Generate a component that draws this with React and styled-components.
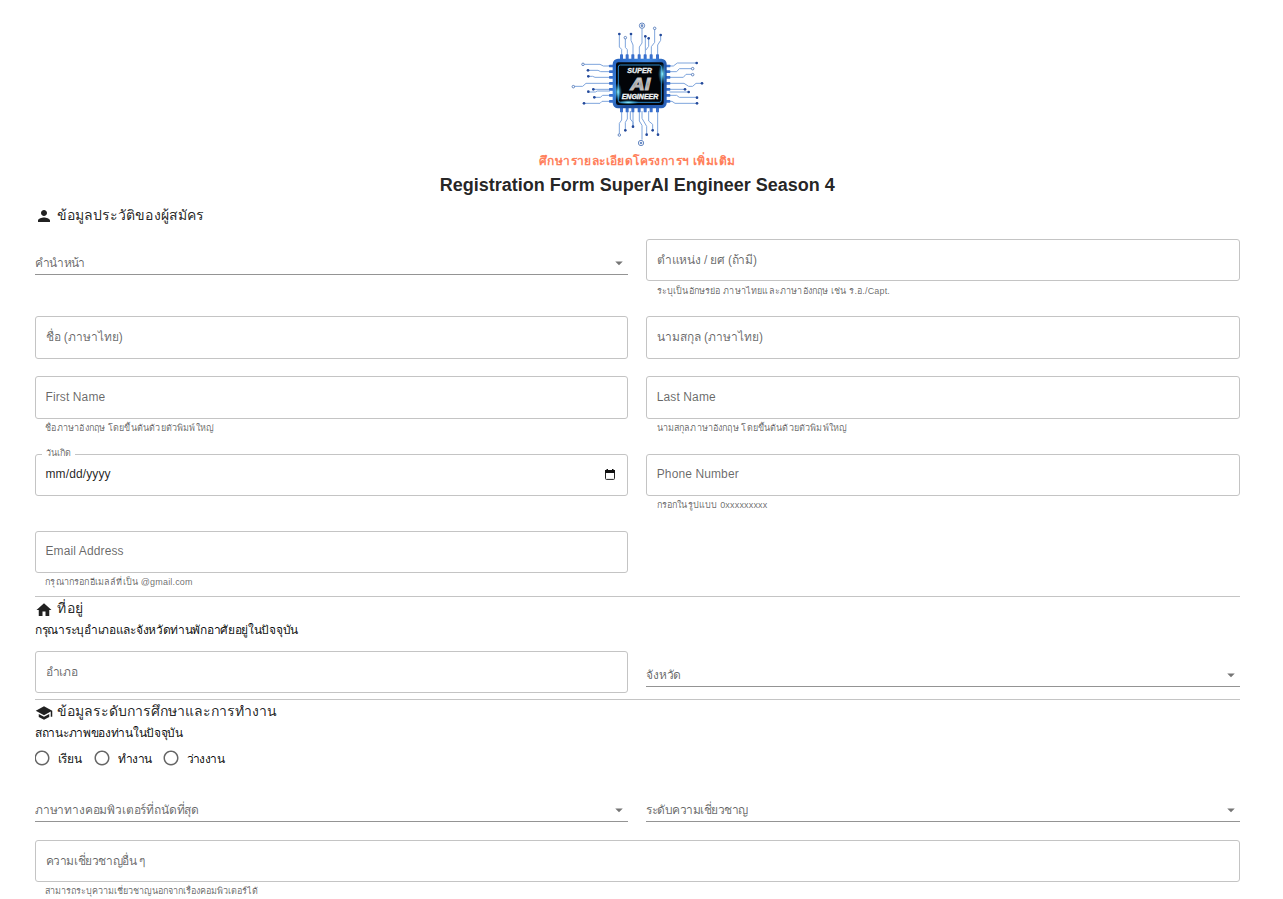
import React from "react";
import styled, { createGlobalStyle } from "styled-components";

const GlobalStyle = createGlobalStyle`
  *, *::before, *::after { box-sizing: border-box; }
  html, body { margin: 0; padding: 0; background: #fff; overflow: hidden; }
  body {
    color: rgba(0, 0, 0, 0.87);
    font-family: "Liberation Sans", sans-serif;
    font-size: 12px;
  }
`;

const Page = styled.main`
  width: 1204.5px;
  height: 899px;
  margin-left: 35px;
  overflow: hidden;
`;

const Header = styled.header`
  display: flex;
  flex-direction: column;
  align-items: center;
  height: 203.5px;
  padding-top: 15px;
`;

const Logo = styled.svg`
  display: block;
  width: 155px;
  height: 135px;
`;

const Text = styled.span`
  display: inline-block;
  white-space: nowrap;
  letter-spacing: ${(p) => p.$ls || 0}px;
`;

const MoreLink = styled.a`
  height: 22px;
  line-height: 22px;
  font-size: 12px;
  font-weight: 700;
  color: #ff7f5c;
`;

const Title = styled.h1`
  margin: 0;
  height: 26px;
  line-height: 26px;
  font-size: 18px;
  font-weight: 700;
`;

const SectionTitle = styled.h2`
  display: flex;
  align-items: center;
  gap: 4px;
  height: 23px;
  margin: 0;
  font-size: 14px;
  font-weight: 400;
  line-height: 23px;
  svg { display: block; width: 18px; height: 18px; margin-top: 2px; fill: currentColor; }
`;

const SubTitle = styled.p`
  height: 20px;
  margin: 0;
  line-height: 20px;
  color: rgba(0, 0, 0, 0.95);
`;

const Grid = styled.div`
  display: grid;
  grid-template-columns: 1fr 1fr;
  column-gap: 18px;
  row-gap: 17.85px;
  align-items: start;
  padding-top: ${(p) => p.$top || 0}px;
`;

const FieldWrap = styled.div`
  grid-column: ${(p) => (p.$full ? "1 / -1" : "auto")};
`;

const Box = styled.div`
  position: relative;
  display: flex;
  align-items: center;
  justify-content: space-between;
  height: 42.3px;
  padding: 0 12px 2px 9.5px;
  border: 1px solid #c4c4c4;
  border-radius: 3px;
  color: ${(p) => (p.$filled ? "rgba(0,0,0,0.87)" : "rgba(0,0,0,0.6)")};
`;

const FloatLabel = styled.span`
  position: absolute;
  left: 6px;
  top: -9px;
  height: 15px;
  padding: 0 4px 0 3.5px;
  line-height: 15px;
  background: #fff;
  color: rgba(0, 0, 0, 0.6);
  font-size: 9px;
`;

const CalendarIcon = styled.svg`
  width: 10px;
  height: 11px;
  margin-top: 2px;
`;

const Helper = styled.div`
  height: 14.75px;
  margin: 2.25px 10.25px 0;
  font-size: 9px;
  line-height: 15px;
  color: rgba(0, 0, 0, 0.6);
`;

const SelectLine = styled.div`
  display: flex;
  align-items: center;
  justify-content: space-between;
  height: 24px;
  margin-top: 12px;
  padding-bottom: 1px;
  border-bottom: 1px solid #949494;
  color: rgba(0, 0, 0, 0.6);
  svg { width: 18px; height: 18px; margin-top: 1px; fill: #757575; }
`;

const Divider = styled.hr`
  height: 1px;
  margin: 6px 0 0;
  border: 0;
  background: #c4c4c4;
`;

const RadioRow = styled.div`
  display: flex;
  align-items: center;
  height: 30px;
  margin-left: -2px;
  color: rgba(0, 0, 0, 0.95);
`;

const Radio = styled.label`
  display: flex;
  align-items: center;
  width: ${(p) => p.$w}px;
  gap: 6.5px;
  svg { display: block; width: 18px; height: 18px; fill: #666; }
`;

function Field({ label, ls, helper, hls, full }) {
  return (
    <FieldWrap $full={full}>
      <Box><Text $ls={ls}>{label}</Text></Box>
      {helper && <Helper><Text $ls={hls}>{helper}</Text></Helper>}
    </FieldWrap>
  );
}

function SelectField({ label, ls }) {
  return (
    <SelectLine>
      <Text $ls={ls}>{label}</Text>
      <svg viewBox="0 0 24 24"><path d="M7 10l5 5 5-5z" /></svg>
    </SelectLine>
  );
}

function RadioOption({ label, width, ls }) {
  return (
    <Radio $w={width}>
      <svg viewBox="0 0 24 24">
        <path d="M12 2C6.48 2 2 6.48 2 12s4.48 10 10 10 10-4.48 10-10S17.52 2 12 2m0 18c-4.42 0-8-3.58-8-8s3.58-8 8-8 8 3.58 8 8-3.58 8-8 8" />
      </svg>
      <Text $ls={ls}>{label}</Text>
    </Radio>
  );
}

const traces = [
  "M185 125V103L178 96V58", "M202 125V104L196 97V70", "M219 125V90L213 76V58", "M238 125V96L246 84V40",
  "M256 125V64", "M266 70V94L257 106", "M274 125V95L284 82V42", "M293 125V90L302 76V60",
  "M185 288V315L178 325V356", "M202 288V312L196 322V345", "M219 288V334", "M238 288V318L246 331V374",
  "M211 288V312L219 322V334", "M246 288V310L260 334V358", "M266 288V318L278 328V345", "M293 288V358",
  "M150 153H130L120 148H72", "M150 170H122L114 166H84", "M150 187H105L98 184H85", "M150 205H78L68 214H42",
  "M150 223H100", "M150 228H112L106 231H84", "M150 241H128L121 247H103", "M150 259H126L120 265H72",
  "M328 153H340L352 144H410", "M328 170H350L358 161H396", "M328 187H370L378 178H396", "M328 205H372L386 214H398L408 205H426",
  "M328 223H375", "M328 231H386", "M328 241H350L358 247H410", "M328 259H336L345 265H410",
];
const dots = [
  [178, 57], [213, 57], [256, 64], [266, 70], [302, 60], [196, 346], [219, 335], [260, 359], [278, 346], [294, 359],
  [84, 166], [85, 184], [100, 223], [85, 230], [103, 247], [72, 265], [410, 144], [426, 205], [375, 223], [386, 231], [411, 248], [411, 265],
];
const rings = [[196, 68], [284, 40], [178, 360], [69, 148], [40, 215], [398, 161], [398, 179]];
const pins = [185, 202, 219, 238, 256, 274, 293];
const sidePins = [153, 170, 187, 205, 223, 241, 259];

function ChipLogo() {
  return (
    <Logo viewBox="0 0 465 405" role="img" aria-label="Super AI Engineer">
      <defs>
        <linearGradient id="body" x1="0" y1="0" x2="1" y2="1">
          <stop offset="0" stopColor="#2560bd" />
          <stop offset="0.35" stopColor="#3f87e0" />
          <stop offset="0.6" stopColor="#1e4c9c" />
          <stop offset="1" stopColor="#2b65be" />
        </linearGradient>
        <linearGradient id="silver" x1="0" y1="0" x2="0" y2="1">
          <stop offset="0" stopColor="#fff" />
          <stop offset="0.5" stopColor="#9a9a9a" />
          <stop offset="1" stopColor="#f0f0f0" />
        </linearGradient>
        <radialGradient id="glow">
          <stop offset="0" stopColor="#8ff0ff" />
          <stop offset="1" stopColor="#1d9ae0" stopOpacity="0" />
        </radialGradient>
      </defs>
      <g fill="none" stroke="#7fa5dc" strokeWidth="3">
        {traces.map((d) => <path key={d} d={d} />)}
      </g>
      <g fill="#23499a">
        {dots.map(([x, y]) => <circle key={`${x}-${y}`} cx={x} cy={y} r="4" />)}
      </g>
      <g fill="#fff" stroke="#456eb4" strokeWidth="2.4">
        {rings.map(([x, y]) => <circle key={`${x}-${y}`} cx={x} cy={y} r="3.8" />)}
        <circle cx="246" cy="32" r="8" /><circle cx="243" cy="384" r="8" />
      </g>
      <g fill="#6f8fc6"><circle cx="246" cy="32" r="4" /><circle cx="243" cy="384" r="4" /></g>
      <g fill="#3a70cd">
        {pins.map((x) => <rect key={x} x={x - 5} y="118" width="9" height="174" rx="2" />)}
        {sidePins.map((y) => <rect key={y} x="147" y={y - 4} width="184" height="8" rx="2" />)}
      </g>
      <rect x="158" y="131" width="162" height="149" rx="16" fill="url(#body)" />
      <rect x="168" y="142" width="143" height="128" rx="7" fill="#02060d" />
      <rect x="175" y="150" width="129" height="112" rx="6" fill="#020408" stroke="#2a86c9" strokeWidth="3" />
      <ellipse cx="307" cy="177" rx="13" ry="32" fill="url(#glow)" />
      <ellipse cx="174" cy="231" rx="12" ry="28" fill="url(#glow)" />
      <ellipse cx="205" cy="262" rx="34" ry="7" fill="url(#glow)" />
      <g fontFamily="Liberation Sans, sans-serif" fontWeight="700" fontStyle="italic" textAnchor="middle">
        <text x="239" y="174" fontSize="20" textLength="74" lengthAdjust="spacingAndGlyphs" fill="#e8edf0" stroke="#e8edf0">SUPER</text>
        <text x="241" y="226" fontSize="52" textLength="60" lengthAdjust="spacingAndGlyphs" fill="url(#silver)" stroke="#bbb" strokeWidth="3">AI</text>
        <text x="240" y="252" fontSize="19" textLength="110" lengthAdjust="spacingAndGlyphs" fill="#f1f4f6" stroke="#f1f4f6">ENGINEER</text>
      </g>
    </Logo>
  );
}

export default function App() {
  return (
    <>
      <GlobalStyle />
      <Page>
        <Header>
          <ChipLogo />
          <MoreLink><Text $ls={0.39}>ศึกษารายละเอียดโครงการฯ เพิ่มเติม</Text></MoreLink>
          <Title><Text>Registration Form SuperAI Engineer Season 4</Text></Title>
        </Header>

        <SectionTitle>
          <svg viewBox="0 0 24 24"><path d="M12 12c2.21 0 4-1.79 4-4s-1.79-4-4-4-4 1.79-4 4 1.79 4 4 4m0 2c-2.67 0-8 1.34-8 4v2h16v-2c0-2.66-5.33-4-8-4" /></svg>
          <Text $ls={0.05}>ข้อมูลประวัติของผู้สมัคร</Text>
        </SectionTitle>
        <Grid $top={12.65}>
          <SelectField label="คำนำหน้า" ls={-0.75} />
          <Field label="ตำแหน่ง / ยศ (ถ้ามี)" ls={-0.2} helper="ระบุเป็นอักษรย่อ ภาษาไทยและภาษาอังกฤษ เช่น ร.อ./Capt." hls={0.17} />
          <Field label="ชื่อ (ภาษาไทย)" />
          <Field label="นามสกุล (ภาษาไทย)" />
          <Field label="First Name" ls={0.11} helper="ชื่อภาษาอังกฤษ โดยขึ้นต้นด้วยตัวพิมพ์ใหญ่" hls={0.18} />
          <Field label="Last Name" ls={0.11} helper="นามสกุลภาษาอังกฤษ โดยขึ้นต้นด้วยตัวพิมพ์ใหญ่" hls={0.15} />
          <FieldWrap>
            <Box $filled>
              <FloatLabel><Text>วันเกิด</Text></FloatLabel>
              <Text $ls={0.11}>mm/dd/yyyy</Text>
              <CalendarIcon viewBox="0 0 10 11">
                <path fill="none" stroke="#222" d="M.5 3v6.5a.9.9 0 0 0 .9.9h7.2a.9.9 0 0 0 .9-.9V3" />
                <path fill="#111" d="M0 1h10v3H0zM1.5 0h1.5v1H1.5zM7 0h1.5v1H7z" />
              </CalendarIcon>
            </Box>
          </FieldWrap>
          <Field label="Phone Number" ls={0.11} helper="กรอกในรูปแบบ 0xxxxxxxxx" hls={0.18} />
          <Field label="Email Address" ls={0.11} helper="กรุณากรอกอีเมลล์ที่เป็น @gmail.com" hls={0.17} />
        </Grid>
        <Divider />

        <SectionTitle>
          <svg viewBox="0 0 24 24"><path d="M10 20v-6h4v6h5v-8h3L12 3 2 12h3v8z" /></svg>
          <Text $ls={0.6}>ที่อยู่</Text>
        </SectionTitle>
        <SubTitle><Text $ls={-0.3}>กรุณาระบุอำเภอและจังหวัดท่านพักอาศัยอยู่ในปัจจุบัน</Text></SubTitle>
        <Grid $top={11}>
          <Field label="อำเภอ" ls={-0.2} />
          <SelectField label="จังหวัด" ls={-0.2} />
        </Grid>
        <Divider />

        <SectionTitle>
          <svg viewBox="0 0 24 24"><path d="M5 13.18v4L12 21l7-3.82v-4L12 17zM12 3 1 9l11 6 9-4.91V17h2V9z" /></svg>
          <Text>ข้อมูลระดับการศึกษาและการทำงาน</Text>
        </SectionTitle>
        <SubTitle><Text $ls={-0.3}>สถานะภาพของท่านในปัจจุบัน</Text></SubTitle>
        <RadioRow>
          <RadioOption width={60} label="เรียน" ls={-0.2} />
          <RadioOption width={69} label="ทำงาน" ls={-0.4} />
          <RadioOption width={69} label="ว่างงาน" ls={-0.6} />
        </RadioRow>
        <Grid $top={12.8}>
          <SelectField label="ภาษาทางคอมพิวเตอร์ที่ถนัดที่สุด" ls={-0.17} />
          <SelectField label="ระดับความเชี่ยวชาญ" ls={-0.5} />
          <Field full label="ความเชี่ยวชาญอื่น ๆ" ls={-0.4} helper="สามารถระบุความเชี่ยวชาญนอกจากเรื่องคอมพิวเตอร์ได้" />
        </Grid>
      </Page>
    </>
  );
}
